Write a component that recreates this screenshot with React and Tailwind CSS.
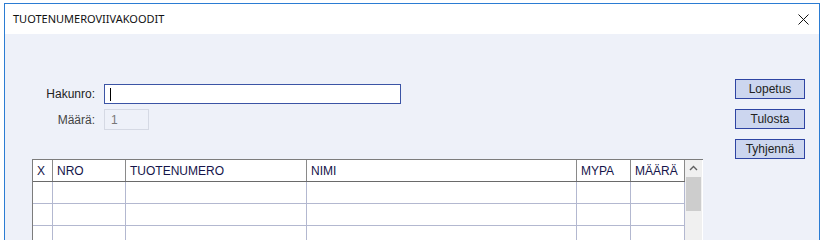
export default function App() {
  const cols = [
    { label: "X", w: "w-[20px]" },
    { label: "NRO", w: "w-[73px]" },
    { label: "TUOTENUMERO", w: "w-[181px]" },
    { label: "NIMI", w: "w-[270px]" },
    { label: "MYPA", w: "w-[54px]" },
    { label: "MÄÄRÄ", w: "w-[54px]" },
  ];
  const rows = [0, 1, 2, 3];

  return (
    <div className="w-[822px] h-[240px] overflow-hidden bg-white pt-[3px] pl-[4px] pr-[2px] font-['Liberation_Sans',Arial,sans-serif]">
      <div className="border border-[#2b7cd3] h-[280px] flex flex-col">
        {/* title bar */}
        <div className="h-[30px] bg-white flex items-center justify-between pl-[8px] pr-[10px] shrink-0">
          <span className="text-[11px] text-[#111] font-['Noto_Sans',sans-serif]">TUOTENUMEROVIIVAKOODIT</span>
          <svg width="11" height="11" viewBox="0 0 11 11">
            <path d="M0.5 0.5 L10.5 10.5 M10.5 0.5 L0.5 10.5" stroke="#111" strokeWidth="1" />
          </svg>
        </div>

        {/* body */}
        <div className="flex-1 bg-[#eef1f9] flex">
          <div className="pl-[27px] pt-[50px] flex flex-col">
            <div className="flex items-center">
              <label className="w-[63px] text-right text-[12px] text-[#222]">Hakunro:</label>
              <div className="ml-[9px] w-[297px] h-[20px] bg-white border border-[#3b54a5] flex items-center pl-[5px]">
                <div className="w-px h-[13px] bg-black" />
              </div>
            </div>
            <div className="flex items-center mt-[5px]">
              <label className="w-[63px] text-right text-[12px] text-[#444]">Määrä:</label>
              <div className="ml-[9px] w-[45px] h-[21px] bg-[#eef1f9] border border-[#d5d9e4] flex items-center pl-[6px] text-[12px] text-[#777]">
                1
              </div>
            </div>

            {/* table */}
            <div className="mt-[29px] w-[671px] bg-white border-t border-l border-[#7c7c7c] flex">
              <div className="flex flex-col">
                <div className="flex h-[22px] border-b border-[#6a6a6a]">
                  {cols.map((c) => (
                    <div key={c.label} className={`${c.w} border-r border-[#8a8a8a] flex items-center pl-[4px] text-[12px] text-[#15154a]`}>
                      {c.label}
                    </div>
                  ))}
                </div>
                {rows.map((r) => (
                  <div key={r} className="flex h-[22px] border-b border-[#b3b8d0]">
                    {cols.map((c) => (
                      <div key={c.label} className={`${c.w} border-r border-[#b3b8d0]`} />
                    ))}
                  </div>
                ))}
              </div>
              <div className="w-[17px] bg-[#f0f0f0] flex flex-col items-center">
                <svg width="17" height="17" viewBox="0 0 17 17">
                  <path d="M5 10 L8.5 6.5 L12 10" stroke="#606060" strokeWidth="1.4" fill="none" />
                </svg>
                <div className="w-[15px] h-[34px] bg-[#cdcdcd]" />
              </div>
            </div>
          </div>

          <div className="ml-auto pr-[14px] pt-[45px] flex flex-col gap-[10px]">
            <button className="w-[70px] h-[20px] bg-[#ccd6ef] border border-[#2e44a3] text-[12px] text-[#222]">Lopetus</button>
            <button className="w-[70px] h-[20px] bg-[#ccd6ef] border border-[#2e44a3] text-[12px] text-[#222]">Tulosta</button>
            <button className="w-[70px] h-[20px] bg-[#ccd6ef] border border-[#2e44a3] text-[12px] text-[#222]">Tyhjennä</button>
          </div>
        </div>
      </div>
    </div>
  );
}
